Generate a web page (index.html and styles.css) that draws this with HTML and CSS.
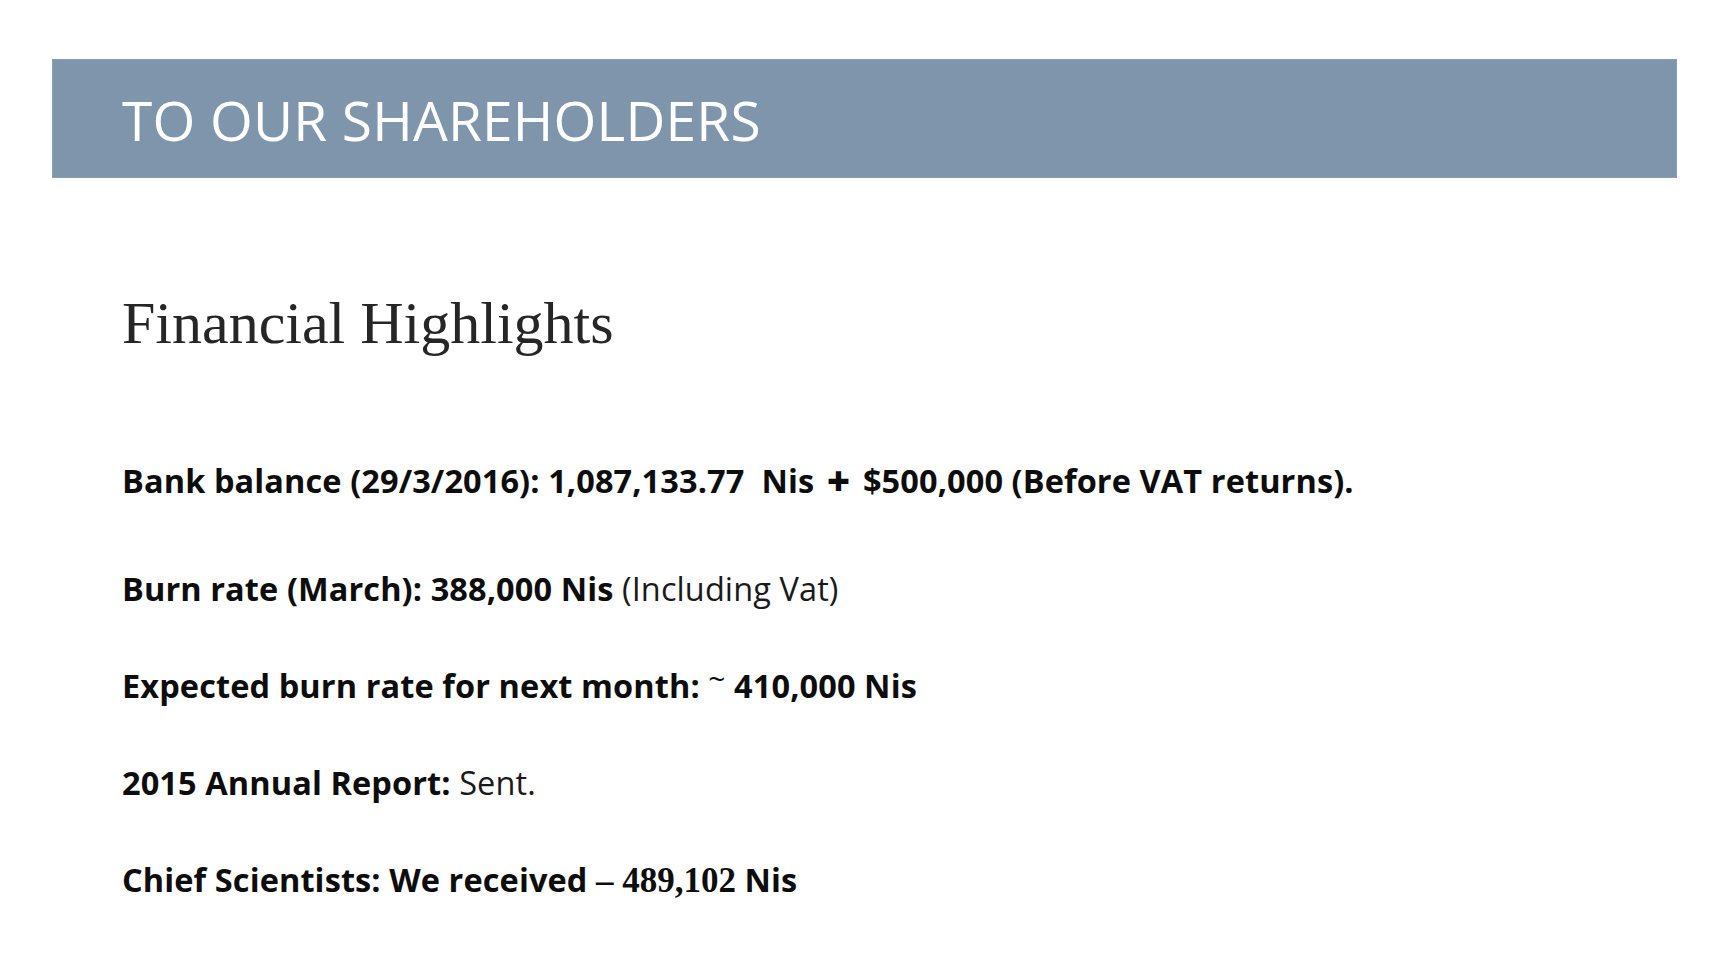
FILE: index.html
```html
<!DOCTYPE html>
<html lang="en">
<head>
<meta charset="utf-8">
<title>To Our Shareholders</title>
<link rel="stylesheet" href="styles.css">
</head>
<body>
<main class="slide">
  <header class="title-bar">
    <h1 class="title">TO OUR SHAREHOLDERS</h1>
  </header>
  <section class="content">
    <h2 class="subtitle">Financial Highlights</h2>
    <ul class="facts">
      <li class="fact fact-first">Bank balance (29/3/2016): 1,087,133.77&nbsp; Nis <span class="plus">+</span> $500,000 (Before VAT returns).</li>
      <li class="fact">Burn rate (March): 388,000 Nis <span class="regular">(Including Vat)</span></li>
      <li class="fact">Expected burn rate for next month: <span class="tilde">~</span> 410,000 Nis</li>
      <li class="fact">2015 Annual Report: <span class="regular">Sent.</span></li>
      <li class="fact">Chief Scientists: We received <span class="serif">– 489,102</span> Nis</li>
    </ul>
  </section>
</main>
</body>
</html>
```

FILE: styles.css
```css
html, body {
  margin: 0;
  padding: 0;
  background: #ffffff;
}

.slide {
  width: 1727px;
  height: 955px;
  overflow: hidden;
  padding-top: 59px;
  box-sizing: border-box;
}

.title-bar {
  margin-left: 52px;
  width: 1625px;
  height: 119px;
  box-sizing: border-box;
  padding: 2px 0 0 70px;
  background: #7f95ab;
  box-shadow: inset 0 0 0 1px #8a9db2;
}

.title {
  margin: 0;
  font-family: "Open Sans", "Noto Sans", sans-serif;
  font-weight: 400;
  font-size: 55px;
  line-height: 117px;
  color: #ffffff;
  letter-spacing: 0.2px;
}

.content {
  padding-left: 122px;
}

.subtitle {
  margin: 110px 0 0 0;
  font-family: "Liberation Serif", "Times New Roman", serif;
  font-weight: 400;
  font-size: 60px;
  line-height: 70px;
  color: #262626;
}

.facts {
  list-style: none;
  margin: 103px 0 0 0;
  padding: 0;
  display: flex;
  flex-direction: column;
  gap: 57px;
}

.fact {
  font-family: "Open Sans", "Noto Sans", sans-serif;
  font-weight: 700;
  font-size: 32.5px;
  line-height: 40px;
  height: 40px;
  color: #0d0d0d;
  letter-spacing: 0.1px;
  white-space: nowrap;
}

.fact-first {
  margin-bottom: 11px;
}

.regular {
  font-weight: 400;
  color: #1a1a1a;
}

.plus {
  padding: 0 4px;
  font-size: 40px;
  font-weight: 800;
  line-height: 0;
  vertical-align: -3px;
}

.tilde {
  font-weight: 400;
  font-size: 30px;
  line-height: 0;
  vertical-align: 8px;
}

.serif {
  font-family: "Liberation Serif", "Times New Roman", serif;
  font-weight: 700;
  font-size: 35px;
  line-height: 0;
  letter-spacing: 0;
}
```
